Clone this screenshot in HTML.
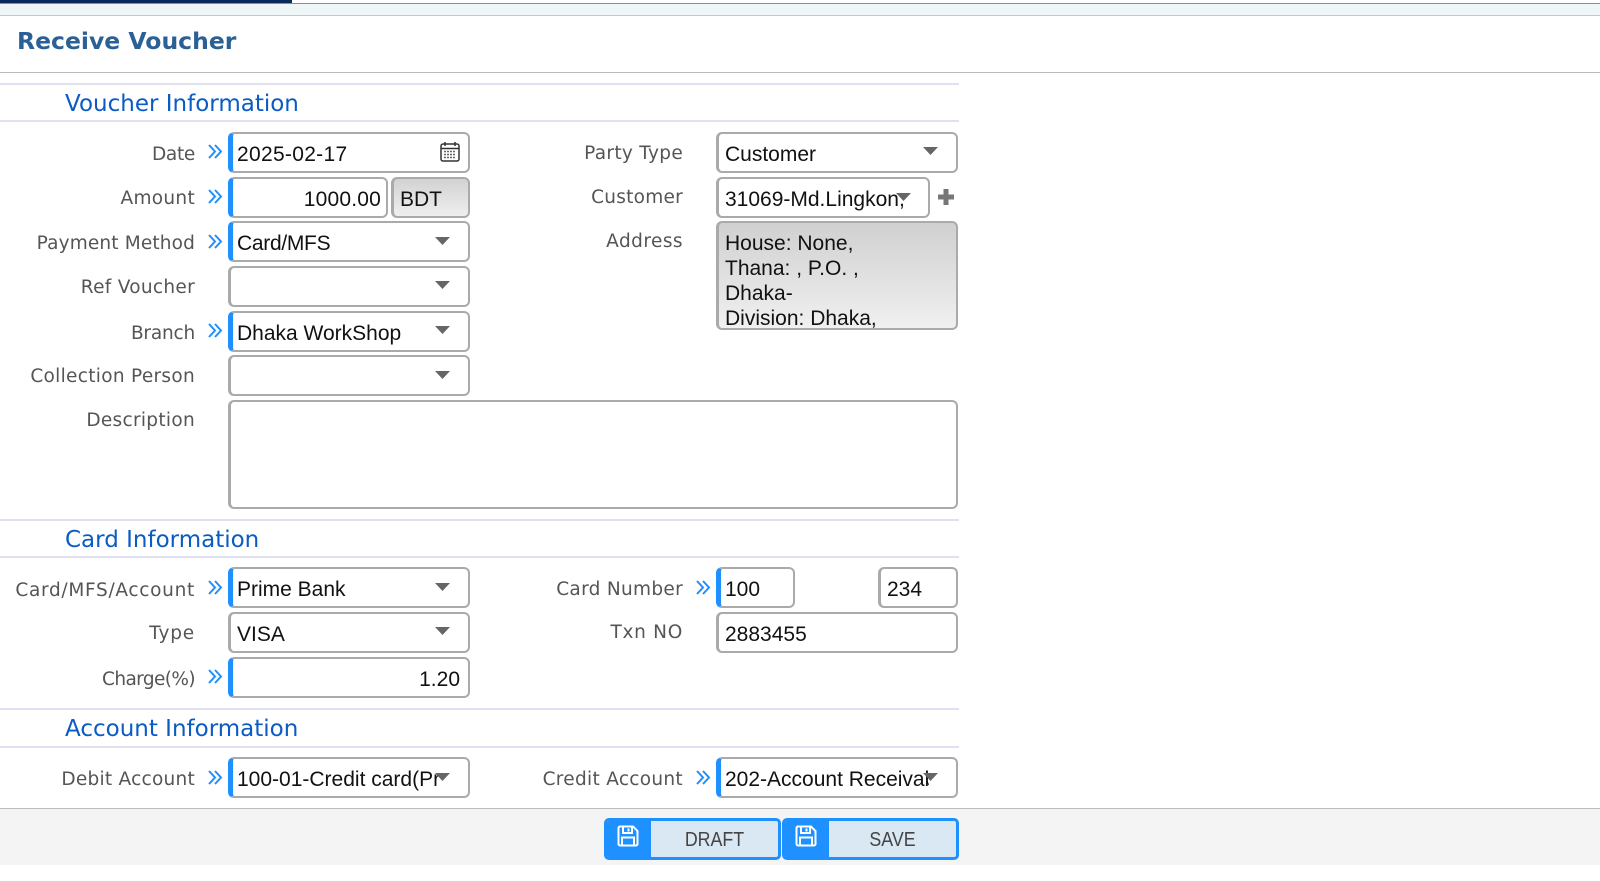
<!DOCTYPE html>
<html><head><meta charset="utf-8"><title>Receive Voucher</title>
<style>
html,body{margin:0;padding:0;background:#fff;width:1600px;height:881px;overflow:hidden}
body{position:relative;font-family:"Liberation Sans",sans-serif}
.a{position:absolute}
.l{position:absolute;right:1405px;font:18.5px/24px "DejaVu Sans",sans-serif;color:#555;white-space:nowrap}
.r{right:917px}
.h{position:absolute;left:0;width:959px;height:2px;background:#e0e0f0}
.s{position:absolute;left:65px;font:23px/28px "DejaVu Sans",sans-serif;color:#0a5bc4;white-space:nowrap}
.f{position:absolute;box-sizing:border-box;height:41px;border:2px solid #aaa;border-left-width:3px;border-radius:6px;background:#fff;font-size:21px;line-height:41px;color:#111;padding-left:6px;white-space:nowrap;overflow:hidden}
.q{border-left:5px solid #1e90ff;padding-left:4px}
.t{text-align:right;padding:0 5px 0 0}
.c{position:absolute;width:15px;height:15px}
.ar{position:absolute;width:15px;height:8px}
.b{position:absolute;box-sizing:border-box;top:818px;height:42px;border:3px solid #1e90ff;border-radius:5px;background:#d9e8f2;font-size:20px;line-height:39px;color:#444;text-align:center;overflow:hidden}
.b i{position:absolute;left:0;top:0;width:44px;height:100%;background:#1e90ff}
.b span{display:block;margin-left:44px;transform:scaleX(.89)}
.b svg{position:absolute;left:10px;top:4px}
</style></head><body>
<svg width="0" height="0" style="position:absolute"><defs>
<symbol id="dc" viewBox="0 0 15 15"><path d="M1 1L7 7.500L1 14M7 1L13 7.500L7 14" fill="none" stroke="#1e90ff" stroke-width="2"/></symbol>
<symbol id="dn" viewBox="0 0 15 8"><path d="M0 0H15L7.500 8Z" fill="#666"/></symbol>
<symbol id="sv" viewBox="0 0 22 22"><path d="M2 1.500H16L20.500 6V19a1.500 1.500 0 0 1-1.500 1.500H3A1.500 1.500 0 0 1 1.500 19V3A1.500 1.500 0 0 1 3 1.500ZM6 2V8H15V2M11.500 3.500V6.500M5 20V12.500H17V20" fill="none" stroke="#fff" stroke-width="2"/></symbol>
</defs></svg>

<div class="a" style="left:0;top:3px;width:1600px;height:1px;background:#8a8f92"></div>
<div class="a" style="left:0;top:0;width:292px;height:3px;background:#0b2a5b"></div>
<div class="a" style="left:0;top:4px;width:1600px;height:11px;background:#eef6f8"></div>
<div class="a" style="left:0;top:15px;width:1600px;height:1px;background:#c8c8c8"></div>
<div class="a" style="left:17px;top:25px;font:bold 23.5px/32px 'DejaVu Sans',sans-serif;color:#2a6095;white-space:nowrap">Receive Voucher</div>
<div class="a" style="left:0;top:72px;width:1600px;height:1px;background:#bbb"></div>

<div class="h" style="top:83px"></div>
<div class="s" style="top:90px">Voucher Information</div>
<div class="h" style="top:120px"></div>

<div class="l" style="top:143px;letter-spacing:-.3px">Date</div>
<div class="l" style="top:187px;letter-spacing:.3px">Amount</div>
<div class="l" style="top:232px;letter-spacing:.15px">Payment Method</div>
<div class="l" style="top:276px;letter-spacing:.3px">Ref Voucher</div>
<div class="l" style="top:322px;letter-spacing:-.2px">Branch</div>
<div class="l" style="top:365px;letter-spacing:.3px">Collection Person</div>
<div class="l" style="top:409px;letter-spacing:.3px">Description</div>
<div class="l r" style="top:142px;letter-spacing:.3px">Party Type</div>
<div class="l r" style="top:186px;letter-spacing:.25px">Customer</div>
<div class="l r" style="top:230px;letter-spacing:.45px">Address</div>

<svg class="c" style="left:208px;top:144px"><use href="#dc"/></svg>
<svg class="c" style="left:208px;top:189px"><use href="#dc"/></svg>
<svg class="c" style="left:208px;top:234px"><use href="#dc"/></svg>
<svg class="c" style="left:208px;top:323px"><use href="#dc"/></svg>
<svg class="c" style="left:208px;top:580px"><use href="#dc"/></svg>
<svg class="c" style="left:208px;top:669px"><use href="#dc"/></svg>
<svg class="c" style="left:208px;top:770px"><use href="#dc"/></svg>
<svg class="c" style="left:696px;top:580px"><use href="#dc"/></svg>
<svg class="c" style="left:696px;top:770px"><use href="#dc"/></svg>

<div class="f q" style="left:228px;top:132px;width:242px;letter-spacing:.3px">2025-02-17</div>
<svg class="a" style="left:440px;top:141px" width="20" height="22" viewBox="0 0 20 22"><path d="M5 1V5M15 1V5" stroke="#333" stroke-width="1.500"/><rect x="1" y="3" width="18" height="17" rx="2" fill="none" stroke="#333" stroke-width="1.500"/><path d="M1 7.500H19" stroke="#333" stroke-width="1.500"/><path d="M4 10.500H16M4 13.500H16M4 16.500H16" stroke="#666" stroke-width="1.500" stroke-dasharray="2 1"/></svg>

<div class="f q t" style="left:228px;top:177px;width:160px;letter-spacing:.2px">1000.00</div>
<div class="f" style="left:391px;top:177px;width:79px;background:linear-gradient(#d2d2d2,#efefef)">BDT</div>

<div class="f q" style="left:228px;top:221px;width:242px;letter-spacing:-.3px">Card/MFS</div>
<svg class="ar" style="left:435px;top:237px"><use href="#dn"/></svg>
<div class="f" style="left:228px;top:266px;width:242px"></div>
<svg class="ar" style="left:435px;top:281px"><use href="#dn"/></svg>
<div class="f q" style="left:228px;top:311px;width:242px">Dhaka WorkShop</div>
<svg class="ar" style="left:435px;top:326px"><use href="#dn"/></svg>
<div class="f" style="left:228px;top:355px;width:242px"></div>
<svg class="ar" style="left:435px;top:371px"><use href="#dn"/></svg>
<div class="f" style="left:228px;top:400px;width:730px;height:109px"></div>

<div class="f" style="left:716px;top:132px;width:242px">Customer</div>
<svg class="ar" style="left:923px;top:147px"><use href="#dn"/></svg>
<div class="f" style="left:716px;top:177px;width:214px"><span style="display:block;width:180px;overflow:hidden">31069-Md.Lingkon,</span></div>
<svg class="ar" style="left:896px;top:193px"><use href="#dn"/></svg>
<svg class="a" style="left:937px;top:188px" width="18" height="18"><path d="M9 1V17M1 9H17" stroke="#777" stroke-width="5"/></svg>
<div class="f" style="left:716px;top:221px;width:242px;height:109px;background:linear-gradient(#d0d0d0,#f0f0f0);line-height:25px;padding-top:8px">House: None,<br>Thana: , P.O. ,<br>Dhaka-<br>Division: Dhaka,</div>

<div class="h" style="top:519px"></div>
<div class="s" style="top:526px">Card Information</div>
<div class="h" style="top:556px"></div>

<div class="l" style="top:579px;letter-spacing:.7px">Card/MFS/Account</div>
<div class="l" style="top:622px;letter-spacing:.8px">Type</div>
<div class="l" style="top:668px;letter-spacing:-.6px">Charge(%)</div>
<div class="l r" style="top:578px;letter-spacing:.3px">Card Number</div>
<div class="l r" style="top:621px;letter-spacing:.7px">Txn NO</div>

<div class="f q" style="left:228px;top:567px;width:242px">Prime Bank</div>
<svg class="ar" style="left:435px;top:583px"><use href="#dn"/></svg>
<div class="f" style="left:228px;top:612px;width:242px">VISA</div>
<svg class="ar" style="left:435px;top:627px"><use href="#dn"/></svg>
<div class="f q t" style="left:228px;top:657px;width:242px;padding-right:8px">1.20</div>
<div class="f q" style="left:716px;top:567px;width:79px">100</div>
<div class="f" style="left:878px;top:567px;width:80px">234</div>
<div class="f" style="left:716px;top:612px;width:242px">2883455</div>

<div class="h" style="top:708px"></div>
<div class="s" style="top:715px">Account Information</div>
<div class="h" style="top:746px"></div>

<div class="l" style="top:768px;letter-spacing:.25px">Debit Account</div>
<div class="l r" style="top:768px;letter-spacing:.3px">Credit Account</div>
<div class="f q" style="left:228px;top:757px;width:242px"><span style="display:block;width:203px;overflow:hidden">100-01-Credit card(Prime)</span></div>
<svg class="ar" style="left:435px;top:773px"><use href="#dn"/></svg>
<div class="f q" style="left:716px;top:757px;width:242px"><span style="display:block;width:204px;overflow:hidden">202-Account Receivable</span></div>
<svg class="ar" style="left:923px;top:773px"><use href="#dn"/></svg>

<div class="a" style="left:0;top:808px;width:1600px;height:57px;background:#f4f4f4;border-top:1px solid #bbb;box-sizing:border-box"></div>
<div class="b" style="left:604px;width:177px"><i></i><svg width="22" height="22"><use href="#sv"/></svg><span>DRAFT</span></div>
<div class="b" style="left:782px;width:177px"><i></i><svg width="22" height="22"><use href="#sv"/></svg><span>SAVE</span></div>
</body></html>
